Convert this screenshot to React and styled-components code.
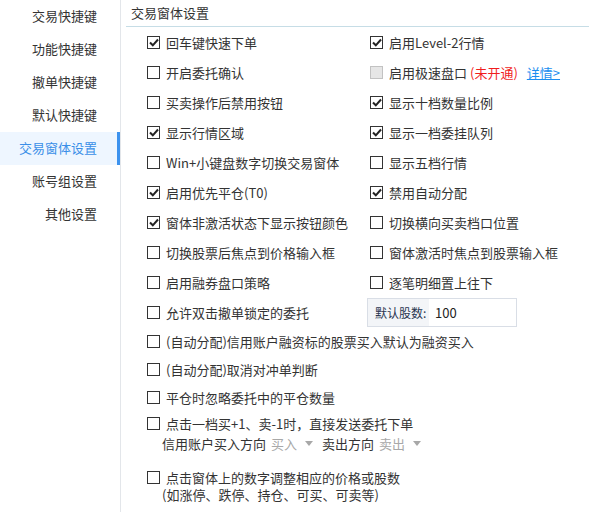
import React from "react"
import styled, { createGlobalStyle } from "styled-components"

const GlobalStyle = createGlobalStyle`
  html, body {
    margin: 0;
    padding: 0;
    background: #fff;
  }
  body {
    font-family: "Microsoft YaHei", "Noto Sans CJK SC", "Liberation Sans", sans-serif;
    font-size: 13px;
    color: #333;
  }
`

const Page = styled.div`
  display: flex;
  width: 596px;
  height: 512px;
  overflow: hidden;
`

const Sidebar = styled.div`
  width: 120px;
  flex-shrink: 0;
  border-right: 1px solid #e3e6ea;
  display: flex;
  flex-direction: column;
`

const NavItem = styled.div`
  height: 33px;
  line-height: 32px;
  text-align: right;
  padding-right: 23px;
  font-size: 13px;
  color: ${(p) => (p.$active ? "#3a8fe8" : "#333")};
  background: ${(p) => (p.$active ? "#eef6ff" : "transparent")};
  box-shadow: ${(p) => (p.$active ? "inset -3px 0 0 #3c92ee" : "none")};
`

const Main = styled.div`
  flex: 1;
  display: flex;
  flex-direction: column;
  padding: 0 7px 0 5px;
`

const Title = styled.div`
  height: 26px;
  line-height: 26px;
  padding-left: 5px;
  border-bottom: 1px solid #c6dde6;
`

const Body = styled.div`
  padding: 0 0 0 21px;
  display: flex;
  flex-direction: column;
`

const Grid = styled.div`
  display: grid;
  grid-template-columns: 223px 1fr;
  grid-auto-rows: 30px;
`

const Row = styled.div`
  display: flex;
  align-items: center;
  height: ${(p) => p.$h || 30}px;
  white-space: nowrap;
`

const Box = styled.span`
  width: 11px;
  height: 11px;
  flex-shrink: 0;
  border: 1px solid ${(p) => (p.$disabled ? "#c2c2c2" : "#333")};
  background: ${(p) => (p.$disabled ? "#e6e6e6" : "#fff")};
  margin-right: 6px;
  display: flex;
  align-items: center;
  justify-content: center;
`

const Red = styled.span`
  color: #f01d1d;
  margin-left: 3px;
`

const Link = styled.span`
  color: #1c8ef0;
  text-decoration: underline;
  margin-left: 9px;
`

const Field = styled.div`
  display: flex;
  width: 150px;
  height: 29px;
  margin-left: -3px;
  border: 1px solid #d9dee6;
  box-sizing: border-box;
`

const FieldLabel = styled.span`
  background: #f3f5f8;
  width: 61px;
  padding-left: 7px;
  box-sizing: border-box;
  line-height: 27px;
  font-size: 12px;
  color: #2a3550;
`

const FieldValue = styled.span`
  padding-left: 6px;
  line-height: 27px;
  color: #222;
`

const Sub = styled.div`
  padding-left: 15px;
  height: ${(p) => p.$h || 17}px;
  line-height: 17px;
  display: flex;
  align-items: flex-start;
  white-space: nowrap;
`

const Select = styled.span`
  color: #a8a8a8;
  margin: 0 9px 0 5px;
  display: inline-flex;
  align-items: center;
  gap: 8px;
`

const Caret = styled.span`
  width: 0;
  height: 0;
  border-left: 4px solid transparent;
  border-right: 4px solid transparent;
  border-top: 5px solid #a8a8a8;
`

const Check = ({ checked, disabled }) => (
  <Box $disabled={disabled}>
    {checked && (
      <svg width="10" height="9" viewBox="0 0 10 9">
        <path d="M1 4.5 L3.8 7.3 L9 1.5" fill="none" stroke="#222" strokeWidth="2" />
      </svg>
    )}
  </Box>
)

const Option = ({ checked, disabled, children, h }) => (
  <Row $h={h}>
    <Check checked={checked} disabled={disabled} />
    {children}
  </Row>
)

const navItems = [
  "交易快捷键",
  "功能快捷键",
  "撤单快捷键",
  "默认快捷键",
  "交易窗体设置",
  "账号组设置",
  "其他设置",
]

const gridOptions = [
  ["回车键快速下单", true],
  ["启用Level-2行情", true],
  ["开启委托确认", false],
  ["extreme", false],
  ["买卖操作后禁用按钮", false],
  ["显示十档数量比例", true],
  ["显示行情区域", true],
  ["显示一档委挂队列", true],
  ["Win+小键盘数字切换交易窗体", false],
  ["显示五档行情", false],
  ["启用优先平仓(T0)", true],
  ["禁用自动分配", true],
  ["窗体非激活状态下显示按钮颜色", true],
  ["切换横向买卖档口位置", false],
  ["切换股票后焦点到价格输入框", false],
  ["窗体激活时焦点到股票输入框", false],
  ["启用融券盘口策略", false],
  ["逐笔明细置上往下", false],
  ["允许双击撤单锁定的委托", false],
  ["field", false],
]

const App = () => {
  return (
    <>
      <GlobalStyle />
      <Page>
        <Sidebar>
          {navItems.map((name) => (
            <NavItem key={name} $active={name === "交易窗体设置"}>
              {name}
            </NavItem>
          ))}
        </Sidebar>
        <Main>
          <Title>交易窗体设置</Title>
          <Body>
            <Grid>
              {gridOptions.map(([label, checked]) => {
                if (label === "extreme") {
                  return (
                    <Option key={label} disabled>
                      启用极速盘口<Red>(未开通)</Red>
                      <Link>详情&gt;</Link>
                    </Option>
                  )
                }
                if (label === "field") {
                  return (
                    <Row key={label}>
                      <Field>
                        <FieldLabel>默认股数:</FieldLabel>
                        <FieldValue>100</FieldValue>
                      </Field>
                    </Row>
                  )
                }
                return (
                  <Option key={label} checked={checked}>
                    {label}
                  </Option>
                )
              })}
            </Grid>
            <Option h={28}>(自动分配)信用账户融资标的股票买入默认为融资买入</Option>
            <Option h={28}>(自动分配)取消对冲单判断</Option>
            <Option h={28}>平仓时忽略委托中的平仓数量</Option>
            <Option h={24}>点击一档买+1、卖-1时，直接发送委托下单</Option>
            <Sub $h={33}>
              信用账户买入方向
              <Select>
                买入
                <Caret />
              </Select>
              卖出方向
              <Select>
                卖出
                <Caret />
              </Select>
            </Sub>
            <Option h={18}>点击窗体上的数字调整相应的价格或股数</Option>
            <Sub>(如涨停、跌停、持仓、可买、可卖等)</Sub>
          </Body>
        </Main>
      </Page>
    </>
  )
}

export default App
